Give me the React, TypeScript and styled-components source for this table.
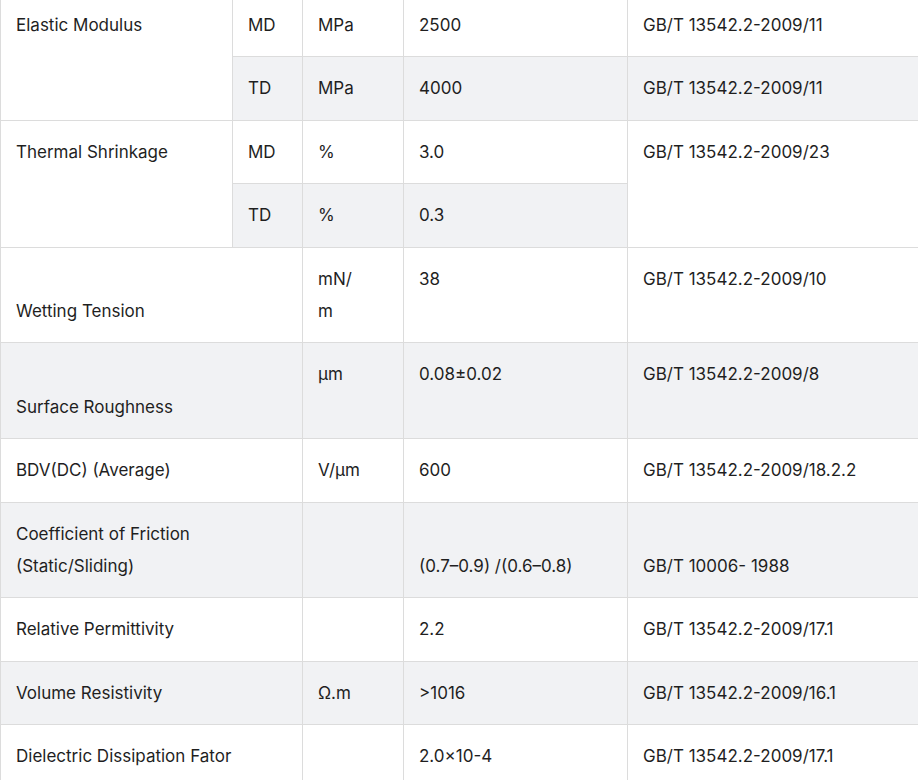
import React from 'react';
import styled, { createGlobalStyle } from 'styled-components';

const GlobalStyle = createGlobalStyle`
  html, body {
    margin: 0;
    padding: 0;
    background: #ffffff;
    overflow: hidden;
  }
`;

const Wrapper = styled.div`
  width: 918px;
  margin-top: -7px;
`;

const Table = styled.table`
  width: 918px;
  border-collapse: collapse;
  table-layout: fixed;
  font-family: Inter, 'Liberation Sans', sans-serif;
  font-size: 17px;
  line-height: 32.4px;
  color: #1f1f1f;

  tr:nth-child(even) td {
    background: #f1f2f4;
  }
`;

const Cell = styled.td<{ $align?: 'top' | 'bottom' }>`
  border: 1px solid #dcdcdc;
  padding: 15px 15px;
  vertical-align: ${({ $align }) => $align || 'top'};
  text-align: left;
  overflow-wrap: break-word;
`;

const App: React.FC = () => {
    return (
        <Wrapper>
            <GlobalStyle />
            <Table>
                <colgroup>
                    <col style={{ width: 232 }} />
                    <col style={{ width: 70 }} />
                    <col style={{ width: 101 }} />
                    <col style={{ width: 224 }} />
                    <col style={{ width: 291 }} />
                </colgroup>
                <tbody>
                    <tr>
                        <Cell rowSpan={2}>Elastic Modulus</Cell>
                        <Cell>MD</Cell>
                        <Cell>MPa</Cell>
                        <Cell>2500</Cell>
                        <Cell>GB/T 13542.2-2009/11</Cell>
                    </tr>
                    <tr>
                        <Cell>TD</Cell>
                        <Cell>MPa</Cell>
                        <Cell>4000</Cell>
                        <Cell>GB/T 13542.2-2009/11</Cell>
                    </tr>
                    <tr>
                        <Cell rowSpan={2}>Thermal Shrinkage</Cell>
                        <Cell>MD</Cell>
                        <Cell>%</Cell>
                        <Cell>3.0</Cell>
                        <Cell rowSpan={2}>GB/T 13542.2-2009/23</Cell>
                    </tr>
                    <tr>
                        <Cell>TD</Cell>
                        <Cell>%</Cell>
                        <Cell>0.3</Cell>
                    </tr>
                    <tr>
                        <Cell colSpan={2} $align="bottom">Wetting Tension</Cell>
                        <Cell>mN/<br />m</Cell>
                        <Cell>38</Cell>
                        <Cell>GB/T 13542.2-2009/10</Cell>
                    </tr>
                    <tr>
                        <Cell colSpan={2}><br />Surface Roughness</Cell>
                        <Cell>μm</Cell>
                        <Cell>0.08±0.02</Cell>
                        <Cell>GB/T 13542.2-2009/8</Cell>
                    </tr>
                    <tr>
                        <Cell colSpan={2}>BDV(DC) (Average)</Cell>
                        <Cell>V/μm</Cell>
                        <Cell>600</Cell>
                        <Cell>GB/T 13542.2-2009/18.2.2</Cell>
                    </tr>
                    <tr>
                        <Cell colSpan={2}>Coefficient of Friction<br />(Static/Sliding)</Cell>
                        <Cell></Cell>
                        <Cell $align="bottom">(0.7–0.9) /(0.6–0.8)</Cell>
                        <Cell $align="bottom">GB/T 10006- 1988</Cell>
                    </tr>
                    <tr>
                        <Cell colSpan={2}>Relative Permittivity</Cell>
                        <Cell></Cell>
                        <Cell>2.2</Cell>
                        <Cell>GB/T 13542.2-2009/17.1</Cell>
                    </tr>
                    <tr>
                        <Cell colSpan={2}>Volume Resistivity</Cell>
                        <Cell>Ω.m</Cell>
                        <Cell>&gt;1016</Cell>
                        <Cell>GB/T 13542.2-2009/16.1</Cell>
                    </tr>
                    <tr>
                        <Cell colSpan={2}>Dielectric Dissipation Fator</Cell>
                        <Cell></Cell>
                        <Cell>2.0×10-4</Cell>
                        <Cell>GB/T 13542.2-2009/17.1</Cell>
                    </tr>
                </tbody>
            </Table>
        </Wrapper>
    );
};

export default App;
